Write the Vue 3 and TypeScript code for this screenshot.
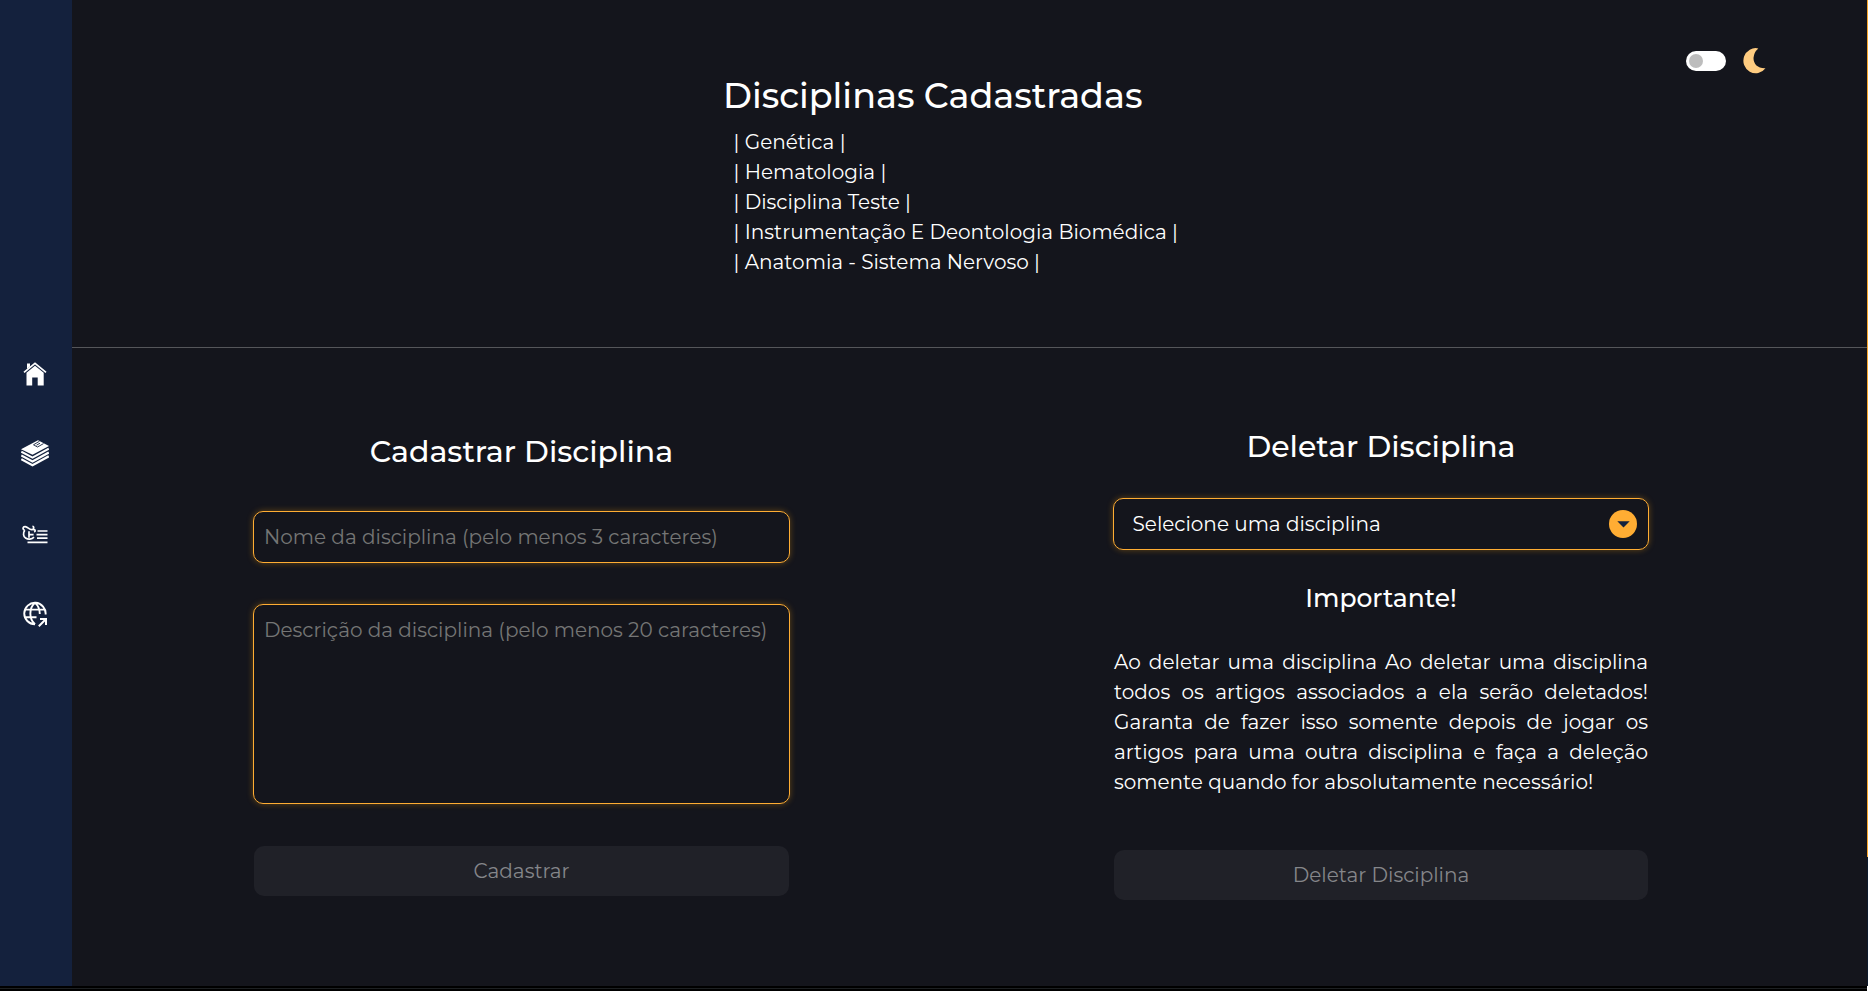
<script setup lang="ts">
import { ref } from 'vue'

const disciplines: string[] = [
  'Genética',
  'Hematologia',
  'Disciplina Teste',
  'Instrumentação E Deontologia Biomédica',
  'Anatomia - Sistema Nervoso',
]
const name = ref('')
const description = ref('')
</script>

<template>
  <div class="screen">
    <div class="app">
      <nav class="sidebar">
        <a class="nav-item" aria-label="Início">
          <svg width="24" height="24" viewBox="0 0 24 24" fill="#fff">
            <path d="M4 1.500h3v3L4 7z" />
            <path d="M1 10.400 12 1.300l11 9.100" fill="none" stroke="#fff" stroke-width="1.700" />
            <path d="M3.500 10.800 12 3.700l8.700 7.100V23.500h-6v-8H9.200v8H3.500z" />
          </svg>
        </a>
        <a class="nav-item books" aria-label="Artigos">
          <svg width="28" height="27" viewBox="0 0 28 27">
            <path d="M0 9.200 17 .3 28 6 11.500 14.800z" fill="#fff" />
            <path d="M18.500 1.200 12.500 4.800l4 2.200 6-3.400M15.500 5.200l3.500-2" fill="none" stroke="#14213d" stroke-width=".9" />
            <g fill="none" stroke="#fff" stroke-width="2.200">
              <path d="M.3 11.600 11.500 17.600 27.800 8.700" />
              <path d="M.3 15.400 11.500 21.400 27.800 12.500" />
              <path d="M.3 19.200 11.500 25.200 27.800 16.300" />
            </g>
          </svg>
        </a>
        <a class="nav-item topics" aria-label="Disciplinas">
          <svg width="26" height="20" viewBox="0 0 26 20" fill="none" stroke="#fff" stroke-width="1.700">
            <path d="M2.600 5.200C.2 4.400.8 1.400 3.200 1.600 6 1.800 7.200 5.200 10.200 4.600c2.200-.6 1.900-3.300.2-3.300" />
            <path d="M11 4.600c2.400-.4 2.900 1.600 1.200 2.500" />
            <path d="M2.800 5.200C.8 8 1.200 11.400 3.600 13c2.400 1.700 6.200 1.500 8.400-.8M7 6.200v6.600M7 9.600h4.600" />
            <path d="M15.500 6H25.500M14.500 9.600H25.500M15 13.200H25.500M5.500 17.400H25.500" />
          </svg>
        </a>
        <a class="nav-item" aria-label="Site">
          <svg width="24" height="26" viewBox="0 0 24 26" fill="none" stroke="#fff" stroke-width="1.900">
            <path d="M22.600 13.500A10.700 10.700 0 1 0 12 23.200" />
            <path d="M12 1.800C5.800 7 5.800 18 12 23.200M12 1.800c3.200 2.700 4.700 6.600 4.800 11.200M2.200 8.600h19.600M2.200 16.200h11.300" />
            <path d="M15.800 25.200l6.700-6.700M17 18h6v6" stroke-width="2" />
          </svg>
        </a>
      </nav>

      <main class="main">
        <header class="top">
          <section class="registered">
            <h1>Disciplinas Cadastradas</h1>
            <ul>
              <li v-for="d in disciplines" :key="d">| {{ d }} |</li>
            </ul>
          </section>
          <div class="theme">
            <span class="switch"><span class="knob"></span></span>
            <svg class="moon" width="23" height="26" viewBox="0 0 23 26">
              <path d="M15.300.4A13.800 13.800 0 0 0 10.500 10c0 6.200 4.600 10.700 12 10.300A12.300 12.600 0 1 1 15.300.4z" fill="#ffcc80" />
            </svg>
          </div>
        </header>

        <div class="forms">
          <form class="create" @submit.prevent>
            <h2>Cadastrar Disciplina</h2>
            <input v-model="name" class="field" placeholder="Nome da disciplina (pelo menos 3 caracteres)" />
            <textarea v-model="description" class="field area" placeholder="Descrição da disciplina (pelo menos 20 caracteres)"></textarea>
            <button class="action" disabled>Cadastrar</button>
          </form>

          <form class="remove" @submit.prevent>
            <h2>Deletar Disciplina</h2>
            <div class="select">
              <span>Selecione uma disciplina</span>
              <span class="chevron">
                <svg width="13" height="7" viewBox="0 0 13 7"><path d="M.3.300h12.400L6.500 6.600z" fill="#14213d" /></svg>
              </span>
            </div>
            <h3>Importante!</h3>
            <p>Ao deletar uma disciplina Ao deletar uma disciplina todos os artigos associados a ela serão deletados! Garanta de fazer isso somente depois de jogar os artigos para uma outra disciplina e faça a deleção somente quando for absolutamente necessário!</p>
            <button class="action" disabled>Deletar Disciplina</button>
          </form>
        </div>
      </main>

      <div class="scrollbar"></div>
    </div>
    <footer class="edge"><span></span></footer>
  </div>
</template>

<style>
body {
  background: #000;
}
</style>

<style scoped>
* {
  box-sizing: border-box;
}
.screen {
  height: 991px;
  display: flex;
  flex-direction: column;
  overflow: hidden;
  font-family: Montserrat, Inter, sans-serif;
  font-size: 20px;
  font-weight: 400;
  color: #fff;
}
.app {
  height: 986px;
  display: flex;
  background: #14151c;
}
.sidebar {
  width: 72px;
  padding-top: 334px;
  display: flex;
  flex-direction: column;
  align-items: center;
  background: #14213d;
}
.nav-item {
  width: 72px;
  height: 80px;
  padding-right: 2px;
  display: flex;
  align-items: center;
  justify-content: center;
}
.books {
  padding-bottom: 2px;
}
.topics {
  padding-top: 1px;
}
.main {
  flex: 1;
}
.top {
  height: 348px;
  display: flex;
  justify-content: space-between;
  padding: 47px 101px 0 651px;
  border-bottom: 1px solid #55565a;
}
.registered {
  padding-top: 25px;
}
h1,
h2,
h3 {
  margin: 0;
  font-weight: 500;
  white-space: nowrap;
}
h1 {
  font-size: 35px;
  line-height: 48px;
}
ul {
  list-style: none;
  margin: 7px 0 0;
  padding: 0 0 0 10.6px;
}
li {
  line-height: 30px;
  white-space: nowrap;
}
.theme {
  display: flex;
  align-items: flex-start;
  gap: 17px;
}
.switch {
  width: 40px;
  height: 20px;
  margin-top: 4px;
  padding: 3px;
  border-radius: 10px;
  background: #fff;
}
.knob {
  display: block;
  width: 14px;
  height: 14px;
  border-radius: 50%;
  background: #bdbdbd;
}
.moon {
  margin-top: 1px;
}
.forms {
  display: flex;
  gap: 323px;
  padding-left: 181px;
}
.create,
.remove {
  width: 537px;
  display: flex;
  flex-direction: column;
  align-items: center;
}
.create {
  padding-top: 84px;
}
.remove {
  width: 536px;
  padding-top: 79px;
}
h2 {
  font-size: 30px;
  line-height: 40px;
}
.field,
.select {
  width: 100%;
  height: 52px;
  flex: none;
  border: 1px solid #ffad33;
  border-radius: 10px;
  background: transparent;
  box-shadow: 0 0 6px rgba(252, 163, 17, 0.35);
}
.field {
  margin-top: 39px;
  padding: 0 10px;
  font: inherit;
  color: #fff;
  outline: none;
}
.field::placeholder {
  color: #757575;
  opacity: 1;
}
.area {
  height: 200px;
  margin-top: 41px;
  padding: 10px;
  line-height: 30px;
  resize: none;
}
.action {
  width: calc(100% - 2px);
  height: 50px;
  flex: none;
  margin-top: 42px;
  border: 0;
  border-radius: 10px;
  background: #202128;
  color: #85868a;
  font: inherit;
}
.select {
  margin-top: 31px;
  padding: 0 11px 0 18.500px;
  display: flex;
  align-items: center;
  justify-content: space-between;
}
.chevron {
  width: 28px;
  height: 28px;
  display: flex;
  align-items: center;
  justify-content: center;
  border-radius: 50%;
  background: #ffad33;
}
h3 {
  margin-top: 31px;
  font-size: 25px;
  line-height: 34px;
}
p {
  width: 534px;
  margin: 32px 0 0;
  line-height: 30px;
  text-align: justify;
}
.remove .action {
  margin-top: 53px;
}
.scrollbar {
  width: 1px;
  background: linear-gradient(#f9a62b 857px, #0d1a2b 857px);
}
.edge {
  height: 5px;
  display: flex;
  justify-content: flex-end;
  background: linear-gradient(#000 2px, #1d2022 2px, #1d2022 3px, #000 3px);
}
.edge span {
  width: 1px;
  background: #fff;
}
</style>
